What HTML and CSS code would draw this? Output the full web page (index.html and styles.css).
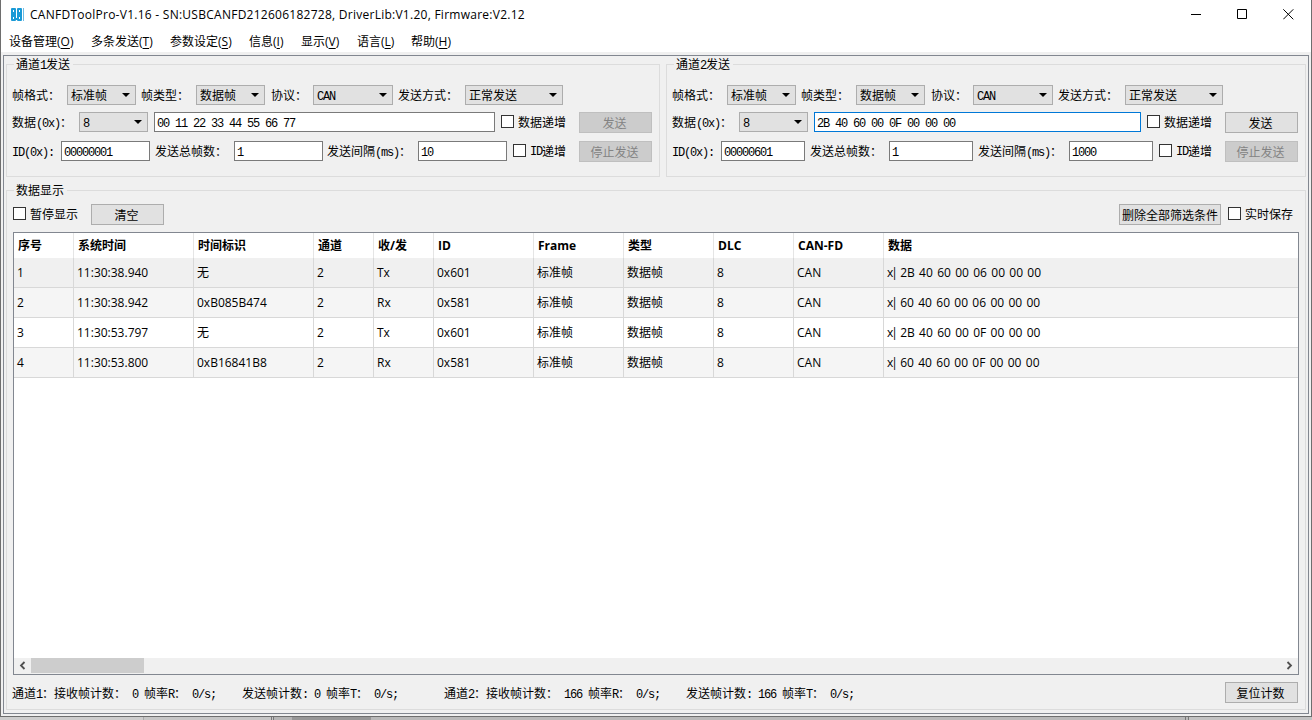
FILE: index.html
```
<!DOCTYPE html>
<html lang="zh-CN">
<head>
  <meta charset="UTF-8">
  <title>CANFDToolPro</title>
  <link rel="stylesheet" href="styles.css">
</head>
<body>
  <div class="window">
    <header class="titlebar">
      <svg class="app-icon" width="14" height="14" viewBox="0 0 14 14">
        <rect x="1" y="0" width="5" height="13" rx="1" fill="#1a9ad6"/>
        <rect x="7" y="0" width="5" height="13" rx="1" fill="#1a9ad6"/>
        <rect x="5" y="10" width="3" height="2" fill="#1a9ad6"/>
        <rect x="13" y="0" width="1" height="13" fill="#6fbde6"/>
        <rect x="3" y="2" width="1" height="2" fill="#fff"/>
        <rect x="9" y="2" width="1" height="2" fill="#fff"/>
        <rect x="3" y="9" width="1" height="2" fill="#fff"/>
        <rect x="9" y="9" width="1" height="2" fill="#fff"/>
      </svg>
      <span class="title">CANFDToolPro-V1.16 - SN:USBCANFD212606182728, DriverLib:V1.20, Firmware:V2.12</span>
      <div class="controls">
        <svg width="11" height="11" viewBox="0 0 11 11"><path d="M0 5.5H10" stroke="#000"/></svg>
        <svg width="11" height="11" viewBox="0 0 11 11"><path d="M.5 .5H9.5V9.5H.5Z" fill="none" stroke="#000"/></svg>
        <svg width="11" height="11" viewBox="0 0 11 11"><path d="M.3 .3L10.3 10.3M10.3 .3L.3 10.3" stroke="#000"/></svg>
      </div>
    </header>
    <nav class="menu">
      <span class="m1">设备管理(<u>O</u>)</span>
      <span class="m2">多条发送(<u>T</u>)</span>
      <span class="m3">参数设定(<u>S</u>)</span>
      <span class="m4">信息(<u>I</u>)</span>
      <span class="m5">显示(<u>V</u>)</span>
      <span class="m6">语言(<u>L</u>)</span>
      <span class="m7">帮助(<u>H</u>)</span>
    </nav>

    <main class="client">
      <div class="channels">
        <section class="group ch1">
          <h2>通道<i>1</i>发送</h2>
          <div class="row r1">
            <label class="w-fmt">帧格式：</label>
            <div class="combo c-fmt">标准帧</div>
            <label class="w-type">帧类型：</label>
            <div class="combo c-type">数据帧</div>
            <label class="w-prot">协议：</label>
            <div class="combo c-prot"><i>CAN</i></div>
            <label class="w-mode">发送方式：</label>
            <div class="combo c-mode">正常发送</div>
          </div>
          <div class="row r2">
            <label class="w-data">数据<i>(0x)</i>：</label>
            <div class="combo c-len"><i>8</i></div>
            <div class="input i-data"><i>00 11 22 33 44 55 66 77</i></div>
            <div class="check">数据递增</div>
            <div class="btn disabled">发送</div>
          </div>
          <div class="row r3">
            <label class="w-id"><i>ID(0x):</i></label>
            <div class="input i-id"><i>00000001</i></div>
            <label class="w-total">发送总帧数：</label>
            <div class="input i-total"><i>1</i></div>
            <label class="w-gap">发送间隔<i>(ms)</i>：</label>
            <div class="input i-gap"><i>10</i></div>
            <div class="check"><i>ID</i>递增</div>
            <div class="btn disabled">停止发送</div>
          </div>
        </section>

        <section class="group ch2">
          <h2>通道<i>2</i>发送</h2>
          <div class="row r1">
            <label class="w-fmt">帧格式：</label>
            <div class="combo c-fmt">标准帧</div>
            <label class="w-type">帧类型：</label>
            <div class="combo c-type">数据帧</div>
            <label class="w-prot">协议：</label>
            <div class="combo c-prot"><i>CAN</i></div>
            <label class="w-mode">发送方式：</label>
            <div class="combo c-mode">正常发送</div>
          </div>
          <div class="row r2">
            <label class="w-data">数据<i>(0x)</i>：</label>
            <div class="combo c-len"><i>8</i></div>
            <div class="input i-data focus"><i>2B 40 60 00 0F 00 00 00</i></div>
            <div class="check">数据递增</div>
            <div class="btn">发送</div>
          </div>
          <div class="row r3">
            <label class="w-id"><i>ID(0x):</i></label>
            <div class="input i-id"><i>00000601</i></div>
            <label class="w-total">发送总帧数：</label>
            <div class="input i-total"><i>1</i></div>
            <label class="w-gap">发送间隔<i>(ms)</i>：</label>
            <div class="input i-gap"><i>1000</i></div>
            <div class="check"><i>ID</i>递增</div>
            <div class="btn disabled">停止发送</div>
          </div>
        </section>
      </div>

      <section class="group display">
        <h2>数据显示</h2>
        <div class="tools">
          <div class="check">暂停显示</div>
          <div class="btn clear">清空</div>
          <div class="btn filter">删除全部筛选条件</div>
          <div class="check save">实时保存</div>
        </div>
        <div class="grid">
          <table>
            <colgroup>
              <col class="k60"><col class="k120"><col class="k120"><col class="k60"><col class="k60"><col class="k100">
              <col class="k90"><col class="k90"><col class="k80"><col class="k90"><col>
            </colgroup>
            <thead>
              <tr><th>序号</th><th>系统时间</th><th>时间标识</th><th>通道</th><th>收/发</th><th>ID</th><th>Frame</th><th>类型</th><th>DLC</th><th>CAN-FD</th><th>数据</th></tr>
            </thead>
            <tbody>
              <tr class="current"><td>1</td><td>11:30:38.940</td><td>无</td><td>2</td><td>Tx</td><td>0x601</td><td>标准帧</td><td>数据帧</td><td>8</td><td>CAN</td><td class="bytes"><b>x|</b> 2B 40 60 00 06 00 00 00</td></tr>
              <tr class="alt"><td>2</td><td>11:30:38.942</td><td>0xB085B474</td><td>2</td><td>Rx</td><td>0x581</td><td>标准帧</td><td>数据帧</td><td>8</td><td>CAN</td><td class="bytes"><b>x|</b> 60 40 60 00 06 00 00 00</td></tr>
              <tr><td>3</td><td>11:30:53.797</td><td>无</td><td>2</td><td>Tx</td><td>0x601</td><td>标准帧</td><td>数据帧</td><td>8</td><td>CAN</td><td class="bytes"><b>x|</b> 2B 40 60 00 0F 00 00 00</td></tr>
              <tr class="alt"><td>4</td><td>11:30:53.800</td><td>0xB16841B8</td><td>2</td><td>Rx</td><td>0x581</td><td>标准帧</td><td>数据帧</td><td>8</td><td>CAN</td><td class="bytes"><b>x|</b> 60 40 60 00 0F 00 00 00</td></tr>
            </tbody>
          </table>
          <div class="scrollbar">
            <svg width="17" height="16" viewBox="0 0 17 16"><path d="M10.5 4L7 7.5L10.5 11" fill="none" stroke="#505050" stroke-width="1.8"/></svg>
            <div class="thumb"></div>
            <svg width="17" height="16" viewBox="0 0 17 16"><path d="M6.5 4L10 7.5L6.5 11" fill="none" stroke="#505050" stroke-width="1.8"/></svg>
          </div>
        </div>
        <div class="status">
          <span class="s1">通道<i>1</i>：接收帧计数：<i> 0 </i>帧率<i>R</i>：<i> 0/s;</i></span>
          <span class="s2">发送帧计数<i>: 0 </i>帧率<i>T</i>：<i> 0/s;</i></span>
          <span class="s3">通道<i>2</i>：接收帧计数：<i> 166 </i>帧率<i>R</i>：<i> 0/s;</i></span>
          <span class="s4">发送帧计数<i>: 166 </i>帧率<i>T</i>：<i> 0/s;</i></span>
          <div class="btn">复位计数</div>
        </div>
      </section>
    </main>
  </div>
  <div class="behind">
    <div class="b1"></div>
    <div class="b2"></div>
    <div class="b3"></div>
    <div class="b4"></div>
    <div class="b5"></div>
  </div>
</body>
</html>
```
FILE: styles.css
```
*,
*::before {
  box-sizing: border-box;
}

body {
  margin: 0;
  height: 720px;
  overflow: hidden;
  background: #b9b9b9;
  color: #000;
  font-family: "Noto Sans CJK SC", sans-serif;
  font-size: 12px;
  line-height: 16px;
}

.window {
  width: 1312px;
  height: 717px;
  background: #f0f0f0;
  border: solid #6e6e6e;
  border-width: 0 1px 1px;
}

/* half-width text, 6px per character */
i {
  font-family: "Liberation Mono", monospace;
  font-style: normal;
  font-size: 12px;
  letter-spacing: -1.2px;
  white-space: pre;
}

/* title bar and menu */
.titlebar {
  display: flex;
  align-items: center;
  height: 30px;
  padding-left: 9px;
  background: #fff;
}

.app-icon {
  margin-bottom: 1px;
}

.title {
  margin-left: 6px;
  font-family: "Open Sans", sans-serif;
  letter-spacing: 0.26px;
  white-space: nowrap;
}

.controls {
  display: flex;
  gap: 35px;
  margin-left: auto;
  padding: 0 17px 2px 0;
}

.menu {
  display: flex;
  height: 22px;
  padding: 4px 0 0 8px;
  background: #fff;
  font-family: "Open Sans", "Noto Sans CJK SC", sans-serif;
  white-space: nowrap;
}

.menu u {
  text-underline-offset: 2px;
}

.m1 { width: 82px; }
.m2 { width: 79px; }
.m3 { width: 79px; }
.m4 { width: 52px; }
.m5 { width: 56px; }
.m6 { width: 54px; }

.client {
  height: 659px;
  margin: 3px 2px 0;
  border: 1px solid #828790;
  padding: 0 2px;
}

/* group boxes */
.group {
  position: relative;
  border: 1px solid #dcdcdc;
}

.group h2 {
  position: absolute;
  top: -9px;
  left: 7px;
  margin: 0;
  padding: 0 3px 0 2px;
  background: #f0f0f0;
  font-size: 12px;
  font-weight: normal;
}

.channels {
  display: flex;
  justify-content: space-between;
  padding-top: 8px;
}

.ch1 { width: 654px; height: 113px; }
.ch2 { width: 640px; height: 113px; }

.row {
  display: flex;
  margin-left: 5px;
  white-space: nowrap;
}

.row label {
  flex: none;
  padding-top: 2px;
}

.r1 { margin-top: 20px; }
.r2 { margin-top: 7px; }
.r3 { margin-top: 8px; }

.w-fmt { width: 55px; }
.w-type { width: 60px; padding-left: 5px; }
.w-prot { width: 48px; padding-left: 6px; }
.w-mode { width: 72px; padding-left: 5px; }
.w-data { width: 67px; }
.w-id { width: 49px; }
.w-total { width: 84px; padding-left: 5px; }
.w-gap { width: 95px; padding-left: 4px; }

.combo {
  position: relative;
  flex: none;
  height: 20px;
  border: 1px solid #adadad;
  background: #e1e1e1;
  padding: 1px 0 0 3px;
}

.combo::after {
  content: "";
  position: absolute;
  right: 5px;
  top: 7px;
  border: 4px solid transparent;
  border-top-color: #000;
  border-bottom: 0;
}

.c-fmt { width: 69px; }
.c-type { width: 69px; }
.c-prot { width: 80px; }
.c-mode { width: 98px; }
.c-len { width: 69px; }

.input {
  flex: none;
  height: 20px;
  border: 1px solid #7a7a7a;
  background: #fff;
  padding: 1px 0 0 2px;
}

.input.focus {
  border-color: #0078d7;
}

.i-data { width: 341px; margin-left: 6px; }
.i-id,
.i-total,
.i-gap { width: 89px; }
.ch2 .i-data { width: 327px; }
.ch2 .i-id,
.ch2 .i-total,
.ch2 .i-gap { width: 84px; }
.ch2 .w-gap { width: 96px; padding-left: 5px; }

.check {
  display: flex;
  flex: none;
  gap: 4px;
  padding-top: 2px;
  margin-left: 6px;
  white-space: nowrap;
}

.check::before {
  content: "";
  width: 13px;
  height: 13px;
  margin-top: 1px;
  border: 1px solid #333;
  background: #fff;
}

.check i {
  margin-right: -4px;
  padding-top: 1px;
}

.btn {
  flex: none;
  width: 73px;
  height: 21px;
  margin-left: auto;
  border: 1px solid #adadad;
  background: #e1e1e1;
  padding: 2px 2px 0 0;
  text-align: center;
  white-space: nowrap;
}

.btn.disabled {
  border-color: #bfbfbf;
  background: #ccc;
  color: #838383;
}

.row .btn {
  margin-right: 7px;
}

/* received frames */
.display {
  height: 520px;
  margin-top: 13px;
}

.tools {
  display: flex;
  padding: 13px 12px 0 0;
}

.tools .clear {
  margin-left: 13px;
}

.tools .filter {
  width: 102px;
  padding-right: 0;
}

.tools .save {
  margin-left: 7px;
}

.grid {
  display: flex;
  flex-direction: column;
  width: 1286px;
  height: 443px;
  margin: 7px 0 0 6px;
  border: 1px solid #828790;
  background: #fff;
}

table {
  width: 1284px;
  table-layout: fixed;
  border-collapse: separate;
  border-spacing: 0;
  font-family: "Open Sans", "Noto Sans CJK SC", sans-serif;
}

.k60 { width: 60px; }
.k80 { width: 80px; }
.k90 { width: 90px; }
.k100 { width: 100px; }
.k120 { width: 120px; }

th {
  height: 25px;
  padding: 0 0 0 4px;
  border-right: 1px solid #e5e5e5;
  text-align: left;
}

td {
  height: 30px;
  padding: 1px 0 0 3px;
  border: solid #d8d8d8;
  border-width: 0 1px 1px 0;
  white-space: pre;
}

th:last-child,
td:last-child {
  border-right: 0;
}

.bytes {
  word-spacing: 1.2px;
}

.bytes b {
  font-weight: normal;
  letter-spacing: -2px;
}

.current td { background: #f0f0f0; }
.alt td { background: #f5f5f5; }

.scrollbar {
  display: flex;
  height: 16px;
  margin-top: auto;
  background: #f0f0f0;
}

.thumb {
  width: 113px;
  height: 15px;
  margin-right: auto;
  background: #cdcdcd;
}

.status {
  display: flex;
  margin: 7px 7px 0 5px;
  white-space: nowrap;
}

.status span {
  flex: none;
  padding-top: 3px;
}

.s1 { width: 230px; }
.s2 { width: 202px; }
.s3 { width: 242px; }

/* strip of the window underneath */
.behind {
  display: flex;
  height: 3px;
  background: #c3c3c3;
}

.b1 { width: 144px; background: #cdcdcd; border-right: 1px solid #aaa; }
.b2 { width: 130px; background: #c6c6c6; border-right: 3px double #777; }
.b3 { width: 18px; background: #b5b5b5; }
.b4 { width: 79px; background: #979797; }
.b5 { width: 818px; background: #b9b9b9; border-right: 4px double #777; }
```
